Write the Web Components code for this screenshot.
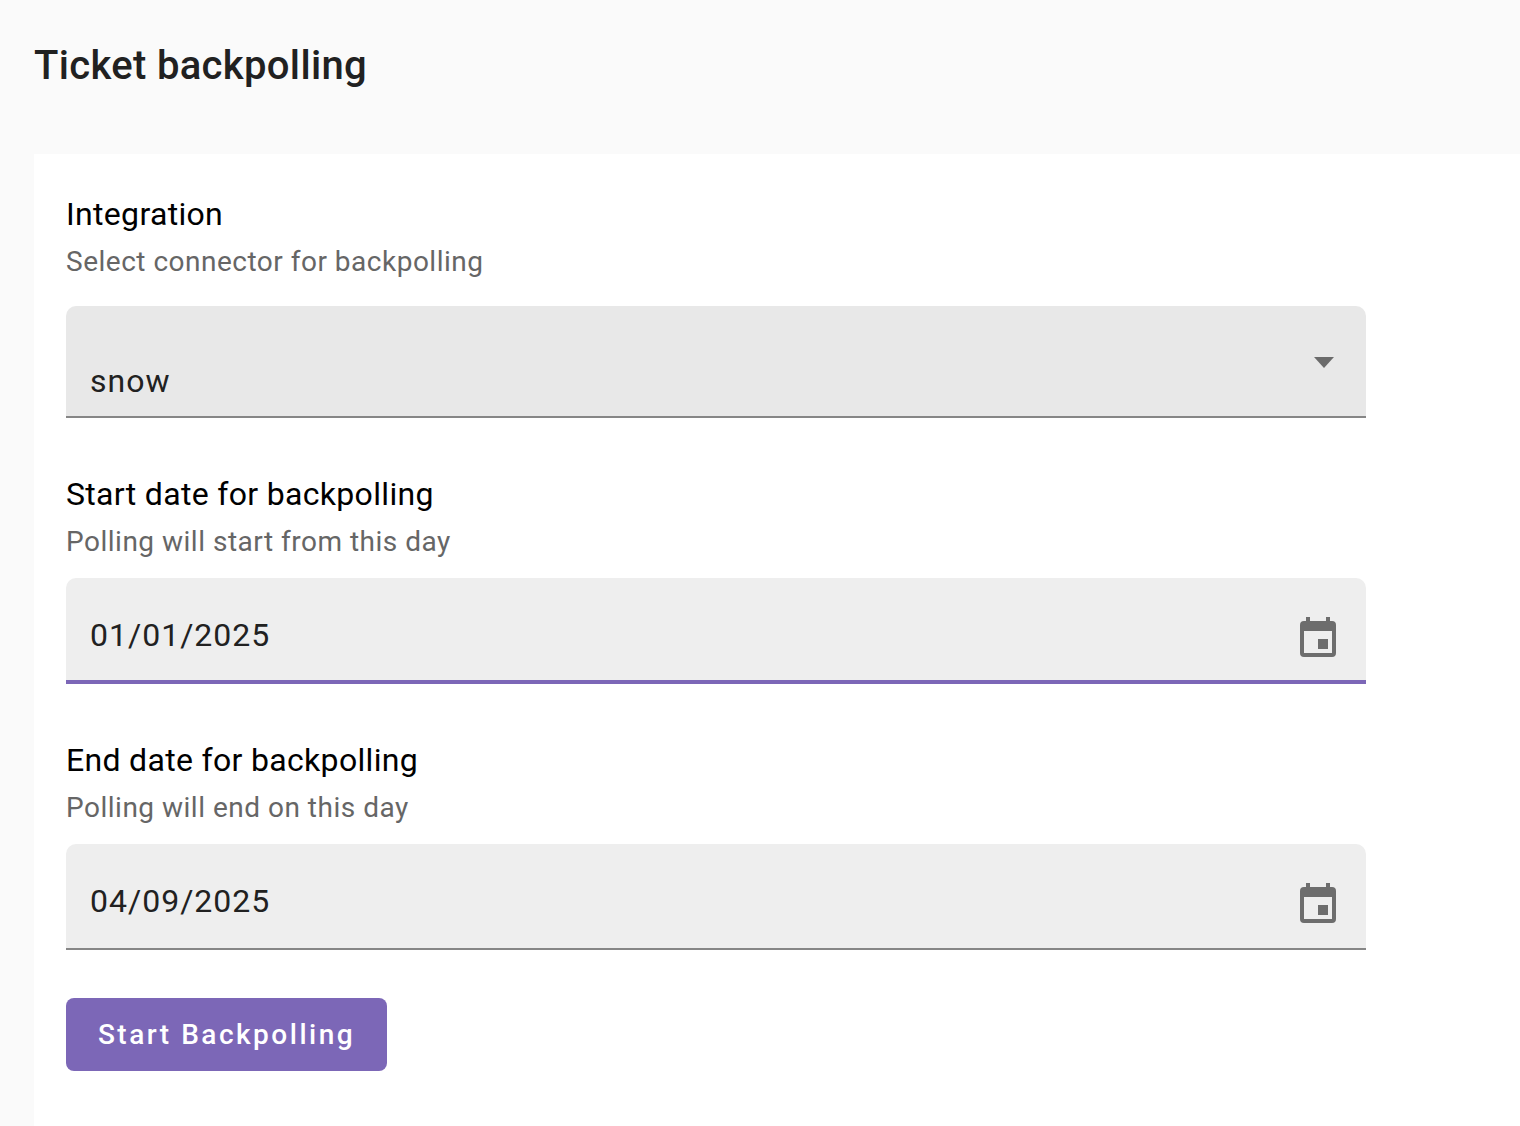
<!DOCTYPE html>
<html lang="en"><head><meta charset="utf-8"><title>Ticket backpolling</title>
<style>
html,body{margin:0;height:100%;}
body{background:#fafafa;font-family:Roboto,"Liberation Sans",sans-serif;overflow:hidden;}
</style></head>
<body>
<backpoll-page>
  <form-field label="Integration" hint="Select connector for backpolling" style="--after:26px">
    <select-box value="snow"></select-box>
  </form-field>
  <form-field label="Start date for backpolling" hint="Polling will start from this day" style="--gap-top:58px">
    <date-box value="01/01/2025" focused></date-box>
  </form-field>
  <form-field label="End date for backpolling" hint="Polling will end on this day" style="--gap-top:58px">
    <date-box value="04/09/2025"></date-box>
  </form-field>
  <action-button>Start Backpolling</action-button>
</backpoll-page>
<script>
function tpl(el,html){el.attachShadow({mode:'open'}).innerHTML=html;}
customElements.define('backpoll-page',class extends HTMLElement{constructor(){super();tpl(this,`<style>
:host{display:flex;flex-direction:column;height:1126px;box-sizing:border-box;}
header{height:154px;box-sizing:border-box;padding:42px 0 0 34px;flex:none;}
h1{margin:0;font:500 40px/48px Roboto,sans-serif;color:#212121;letter-spacing:.33px;}
main{flex:1;margin-left:34px;background:#fff;padding:42px 154px 0 32px;display:flex;flex-direction:column;}
</style><header><h1>Ticket backpolling</h1></header><main><slot></slot></main>`);}});
customElements.define('form-field',class extends HTMLElement{constructor(){super();tpl(this,`<style>
:host{display:block;padding-top:var(--gap-top,0);}
.l{font:400 32px/36px Roboto,sans-serif;color:#000;letter-spacing:.32px;}
.h{font:400 28px/36px Roboto,sans-serif;color:#666;letter-spacing:.5px;margin:12px 0 var(--after,18px);}
</style><div class="l">${this.getAttribute('label')}</div><div class="h">${this.getAttribute('hint')}</div><slot></slot>`);}});
customElements.define('select-box',class extends HTMLElement{constructor(){super();tpl(this,`<style>
:host{display:flex;box-sizing:border-box;height:112px;background:#e8e8e8;border-radius:10px 10px 0 0;border-bottom:2px solid #868686;padding:0 32px 0 24px;}
.v{font:400 32px/40px Roboto,sans-serif;color:#212121;letter-spacing:1px;margin-top:55px;flex:1;}
svg{width:20px;height:11px;margin-top:51px;}
</style><div class="v">${this.getAttribute('value')}</div><svg viewBox="0 0 20 11"><path d="M0 0H20L10 11Z" fill="#6b6b6b"/></svg>`);}});
customElements.define('date-box',class extends HTMLElement{constructor(){super();const f=this.hasAttribute('focused');tpl(this,`<style>
:host{display:flex;box-sizing:border-box;height:106px;background:#eee;border-radius:10px 10px 0 0;border-bottom:${f?'4px solid #7c67b7':'2px solid #868686'};padding:0 30px 0 24px;}
.v{font:400 32px/40px Roboto,sans-serif;color:#212121;letter-spacing:1px;margin-top:37px;flex:1;}
svg{width:36px;height:40px;margin-top:39px;}
</style><div class="v">${this.getAttribute('value')}</div><svg viewBox="0 0 36 40"><path fill="#6d6d6d" fill-rule="evenodd" d="M6 0h4v4h16V0h4v4h2a4 4 0 0 1 4 4v28a4 4 0 0 1-4 4H4a4 4 0 0 1-4-4V8a4 4 0 0 1 4-4h2zM4 14v22h28V14zM18 22h10v10H18z"/></svg>`);}});
customElements.define('action-button',class extends HTMLElement{constructor(){super();tpl(this,`<style>
:host{display:block;margin-top:48px;align-self:flex-start;}
button{display:block;width:321px;height:73px;border:0;border-radius:8px;background:#7c67b7;color:#fff;font:500 28px/1 Roboto,sans-serif;letter-spacing:2.5px;padding:0;}
</style><button type="button"><slot></slot></button>`);}});
</script>
</body></html>
